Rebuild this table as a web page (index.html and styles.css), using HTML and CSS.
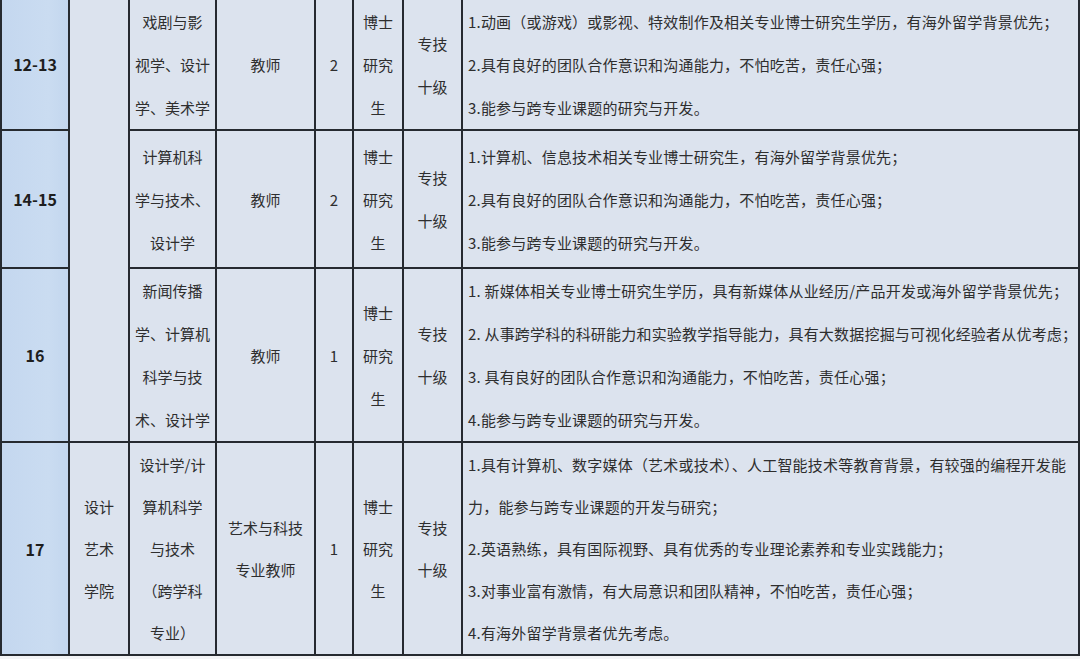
FILE: index.html
```html
<!DOCTYPE html>
<html lang="zh-CN">
<head>
<meta charset="utf-8">
<title>招聘岗位表</title>
<link rel="stylesheet" href="styles.css">
</head>
<body>
<table class="jobs">
  <colgroup>
    <col class="c-no">
    <col class="c-dept">
    <col class="c-major">
    <col class="c-post">
    <col class="c-num">
    <col class="c-edu">
    <col class="c-level">
    <col class="c-req">
  </colgroup>
  <tbody>
    <tr class="r1">
      <td class="no">12-13</td>
      <td class="dept" rowspan="3"></td>
      <td>戏剧与影<br>视学、设计<br>学、美术学</td>
      <td>教师</td>
      <td>2</td>
      <td>博士<br>研究<br>生</td>
      <td>专技<br>十级</td>
      <td class="req">1.动画（或游戏）或影视、特效制作及相关专业博士研究生学历，有海外留学背景优先；<br>2.具有良好的团队合作意识和沟通能力，不怕吃苦，责任心强；<br>3.能参与跨专业课题的研究与开发。</td>
    </tr>
    <tr class="r2">
      <td class="no">14-15</td>
      <td>计算机科<br>学与技术、<br>设计学</td>
      <td>教师</td>
      <td>2</td>
      <td>博士<br>研究<br>生</td>
      <td>专技<br>十级</td>
      <td class="req">1.计算机、信息技术相关专业博士研究生，有海外留学背景优先；<br>2.具有良好的团队合作意识和沟通能力，不怕吃苦，责任心强；<br>3.能参与跨专业课题的研究与开发。</td>
    </tr>
    <tr class="r3">
      <td class="no">16</td>
      <td>新闻传播<br>学、计算机<br>科学与技<br>术、设计学</td>
      <td>教师</td>
      <td>1</td>
      <td>博士<br>研究<br>生</td>
      <td>专技<br>十级</td>
      <td class="req">1. 新媒体相关专业博士研究生学历，具有新媒体从业经历/产品开发或海外留学背景优先；<br>2. 从事跨学科的科研能力和实验教学指导能力，具有大数据挖掘与可视化经验者从优考虑；<br>3. 具有良好的团队合作意识和沟通能力，不怕吃苦，责任心强；<br>4.能参与跨专业课题的研究与开发。</td>
    </tr>
    <tr class="r4">
      <td class="no">17</td>
      <td class="dept">设计<br>艺术<br>学院</td>
      <td>设计学/计<br>算机科学<br>与技术<br>（跨学科<br>专业）</td>
      <td>艺术与科技<br>专业教师</td>
      <td>1</td>
      <td>博士<br>研究<br>生</td>
      <td>专技<br>十级</td>
      <td class="req">1.具有计算机、数字媒体（艺术或技术）、人工智能技术等教育背景，有较强的编程开发能<br>力，能参与跨专业课题的开发与研究；<br>2.英语熟练，具有国际视野、具有优秀的专业理论素养和专业实践能力；<br>3.对事业富有激情，有大局意识和团队精神，不怕吃苦，责任心强；<br>4.有海外留学背景者优先考虑。</td>
    </tr>
  </tbody>
</table>
</body>
</html>
```

FILE: styles.css
```css
html, body {
  margin: 0;
  padding: 0;
  background: #f3f4f6;
}

body {
  width: 1080px;
  height: 659px;
  overflow: hidden;
  font-family: "Noto Sans CJK SC", "Noto Sans", sans-serif;
  color: #2e2e2e;
}

.jobs {
  border-collapse: collapse;
  table-layout: fixed;
  width: 1078px;
  font-size: 15px;
  line-height: 43px;
}

.c-no { width: 68px; }
.c-dept { width: 60px; }
.c-major { width: 87px; }
.c-post { width: 99px; }
.c-num { width: 38px; }
.c-edu { width: 50px; }
.c-level { width: 59px; }
.c-req { width: 617px; }

.jobs td {
  border: 2px solid #262a30;
  background: #dce3ee;
  text-align: center;
  vertical-align: middle;
  padding: 0;
  white-space: nowrap;
  overflow: hidden;
}

.jobs .r1 td { border-top: none; }

.r1 { height: 128px; }
.r2 { height: 138px; }
.r3 { height: 172px; }
.r4 { height: 213px; line-height: 42px; }

.jobs td.no {
  background: linear-gradient(90deg, #c4d7ef 0%, #cadcf1 70%, #c3d6ee 100%);
  font-weight: 700;
  font-size: 16px;
  color: #1e1e1e;
}

.jobs td.req {
  text-align: left;
  padding-left: 5px;
  letter-spacing: 0.2px;
}
```
